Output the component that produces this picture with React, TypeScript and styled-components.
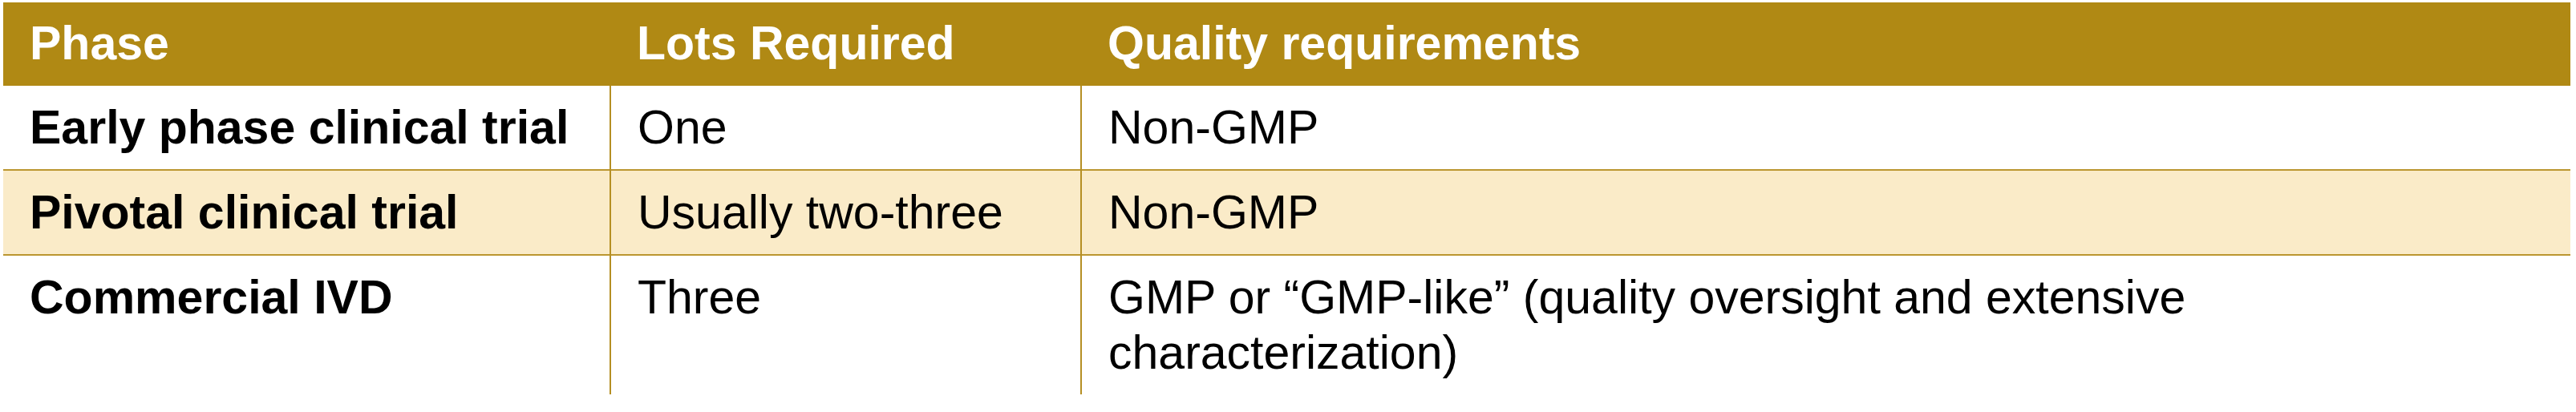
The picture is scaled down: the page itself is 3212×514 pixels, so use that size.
import React from "react";
import styled, { createGlobalStyle } from "styled-components";

const GlobalStyle = createGlobalStyle`
  html, body {
    margin: 0;
    padding: 0;
    background: #ffffff;
  }
  body {
    font-family: "Liberation Sans", Arial, Helvetica, sans-serif;
  }
`;

interface Row {
  phase: string;
  lots: string;
  quality: string;
  shaded?: boolean;
}

const rows: Row[] = [
  { phase: "Early phase clinical trial", lots: "One", quality: "Non-GMP" },
  {
    phase: "Pivotal clinical trial",
    lots: "Usually two-three",
    quality: "Non-GMP",
    shaded: true,
  },
  {
    phase: "Commercial IVD",
    lots: "Three",
    quality:
      "GMP or \u201cGMP-like\u201d (quality oversight and extensive characterization)",
  },
];

const App = () => {
  return (
    <Page>
      <GlobalStyle />
      <Table>
        <colgroup>
          <Col width={757} />
          <Col width={587} />
          <Col width={1857} />
        </colgroup>
        <thead>
          <tr>
            <HeadCell>Phase</HeadCell>
            <HeadCell>Lots Required</HeadCell>
            <HeadCell>Quality requirements</HeadCell>
          </tr>
        </thead>
        <tbody>
          {rows.map((row, i) => (
            <BodyRow key={row.phase} shaded={row.shaded} last={i === rows.length - 1}>
              <Cell bold first>
                {row.phase}
              </Cell>
              <Cell>{row.lots}</Cell>
              <Cell>{row.quality}</Cell>
            </BodyRow>
          ))}
        </tbody>
      </Table>
    </Page>
  );
};

const Page = styled.div`
  padding: 3px 7px 0 4px;
`;

const Table = styled.table`
  width: 3201px;
  table-layout: fixed;
  border-collapse: collapse;
  border-spacing: 0;
  font-size: 59px;
  line-height: 69px;
  color: #000000;
`;

const Col = styled.col<{ width: number }>`
  width: ${(p) => p.width}px;
`;

const HeadCell = styled.th`
  background: #b08914;
  color: #ffffff;
  font-weight: 700;
  text-align: left;
  vertical-align: top;
  padding: 17px 34px 18px 33px;
`;

const BodyRow = styled.tr<{ shaded?: boolean; last?: boolean }>`
  background: ${(p) => (p.shaded ? "#faebc8" : "#ffffff")};
  border-bottom: ${(p) => (p.last ? "none" : "2px solid #bb9630")};
`;

const Cell = styled.td<{ bold?: boolean; first?: boolean }>`
  font-weight: ${(p) => (p.bold ? 700 : 400)};
  text-align: left;
  vertical-align: top;
  padding: 18px 34px 17px 33px;
  border-left: ${(p) => (p.first ? "none" : "2px solid #b58f24")};
`;

export default App;
